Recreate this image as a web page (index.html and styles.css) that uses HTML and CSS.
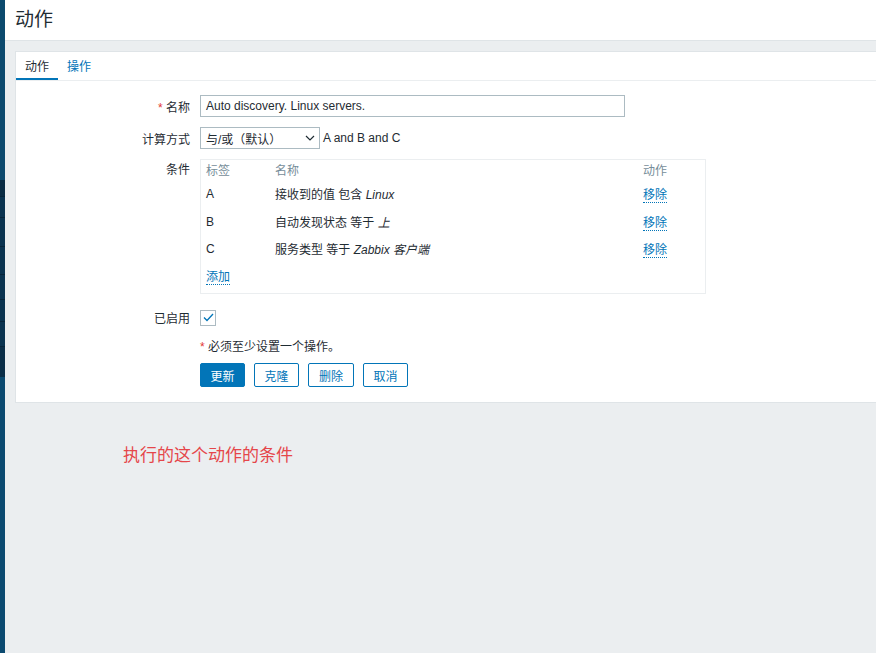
FILE: index.html
```html
<!DOCTYPE html>
<html lang="zh">
<head>
<meta charset="utf-8">
<title>动作</title>
<link rel="stylesheet" href="styles.css">
</head>
<body>
<div class="sidebar">
  <div class="sb-top"></div>
  <div class="sb-dark">
    <div class="sb-seg s1"></div>
    <div class="sb-seg s2"></div>
    <div class="sb-seg s3"></div>
    <div class="sb-seg s4"></div>
    <div class="sb-seg s5"></div>
    <div class="sb-seg s6"></div>
    <div class="sb-seg s7"></div>
    <div class="sb-seg s8"></div>
  </div>
  <div class="sb-bottom"></div>
</div>
<div class="main">
  <header class="page-header"><h1 class="title">动作</h1></header>
  <div class="content">
    <div class="card">
      <ul class="tabs">
        <li class="tab active">动作</li>
        <li class="tab">操作</li>
      </ul>
      <div class="form">
        <div class="row">
          <label class="lbl"><span class="req">*</span> 名称</label>
          <div class="field"><div class="input">Auto discovery. Linux servers.</div></div>
        </div>
        <div class="row">
          <label class="lbl">计算方式</label>
          <div class="field inline">
            <div class="select"><span>与/或（默认）</span>
              <svg class="chev" width="10" height="6" viewBox="0 0 10 6"><path d="M1 1 L5 5 L9 1" fill="none" stroke="#1f2c33" stroke-width="1.2"/></svg>
            </div>
            <span class="formula">A and B and C</span>
          </div>
        </div>
        <div class="row">
          <label class="lbl lbl-top">条件</label>
          <div class="field">
            <div class="cond-box">
              <table class="cond">
                <thead>
                  <tr><th class="c1">标签</th><th class="c2">名称</th><th class="c3">动作</th></tr>
                </thead>
                <tbody>
                  <tr><td>A</td><td>接收到的值 包含 <i>Linux</i></td><td><a class="link">移除</a></td></tr>
                  <tr><td>B</td><td>自动发现状态 等于 <i>上</i></td><td><a class="link">移除</a></td></tr>
                  <tr><td>C</td><td>服务类型 等于 <i>Zabbix 客户端</i></td><td><a class="link">移除</a></td></tr>
                  <tr><td colspan="3"><a class="link">添加</a></td></tr>
                </tbody>
              </table>
            </div>
          </div>
        </div>
        <div class="row row-check">
          <label class="lbl">已启用</label>
          <div class="field">
            <span class="checkbox">
              <svg width="11" height="9" viewBox="0 0 11 9"><path d="M1 4.5 L4 7.5 L10 1" fill="none" stroke="#0275b8" stroke-width="1.3"/></svg>
            </span>
          </div>
        </div>
        <div class="row row-note">
          <div class="lbl"></div>
          <div class="field note"><span class="req">*</span> 必须至少设置一个操作。</div>
        </div>
        <div class="row row-buttons">
          <div class="lbl"></div>
          <div class="field buttons">
            <button class="btn primary">更新</button>
            <button class="btn">克隆</button>
            <button class="btn wide">删除</button>
            <button class="btn">取消</button>
          </div>
        </div>
      </div>
    </div>
    <p class="annotation">执行的这个动作的条件</p>
  </div>
</div>
</body>
</html>
```
FILE: styles.css
```css
* { box-sizing: border-box; }
html, body { margin: 0; padding: 0; }
body {
  display: flex;
  width: 876px;
  height: 653px;
  overflow: hidden;
  background: #ebeef0;
  font-family: "Liberation Sans", Arial, "Noto Sans CJK SC", sans-serif;
  font-size: 12px;
  color: #1f2c33;
}
.sidebar {
  width: 5px;
  flex: none;
  display: flex;
  flex-direction: column;
  background: #0b4a70;
}
.sb-top { height: 180px; background: #0c4a6e; }
.sb-dark { display: flex; flex-direction: column; background: #0a3350; }
.sb-seg { border-bottom: 1px solid #06243a; }
.s1 { height: 17px; background: #0a2c44; }
.s2 { height: 21px; }
.s3 { height: 29px; }
.s4 { height: 28px; }
.s5 { height: 25px; }
.s6 { height: 22px; }
.s7 { height: 25px; }
.s8 { height: 30px; border-bottom: none; background: #0a2e48; }
.sb-bottom { flex: 1; background: #0b4a70; }

.main { flex: 1; display: flex; flex-direction: column; min-width: 0; }
.page-header {
  height: 41px;
  background: #fff;
  border-bottom: 1px solid #dfe4e7;
  padding: 0 10px;
  display: flex;
  align-items: center;
}
.title {
  margin: 0;
  font-size: 19px;
  font-weight: normal;
  color: #1f2c33;
  line-height: 1;
  position: relative;
  top: -1px;
}
.content { padding: 10px 0 0 10px; }
.card {
  background: #fff;
  border: 1px solid #dfe4e7;
  border-right: none;
  height: 352px;
}
.tabs {
  list-style: none;
  margin: 0;
  padding: 0;
  display: flex;
  height: 29px;
  border-bottom: 1px solid #ebeef0;
}
.tab {
  padding: 3px 9px 0 9px;
  line-height: 24px;
  color: #0275b8;
  border-bottom: 2px solid transparent;
  white-space: nowrap;
}
.tab.active { color: #1f2c33; border-bottom-color: #0275b8; }

.form { padding-top: 14px; }
.row { display: flex; align-items: center; margin-bottom: 10px; }
.lbl {
  width: 174px;
  flex: none;
  text-align: right;
  margin-right: 10px;
}
.lbl-top { align-self: flex-start; padding-top: 1px; }
.req { color: #e33734; }
.field { flex: none; }
.inline { display: flex; align-items: center; }
.input {
  width: 425px;
  height: 22px;
  border: 1px solid #acbbc2;
  padding: 0 5px;
  line-height: 20px;
  background: #fff;
}
.select {
  width: 120px;
  height: 22px;
  border: 1px solid #acbbc2;
  padding: 0 4px 0 5px;
  display: flex;
  align-items: center;
  justify-content: space-between;
}
.formula { margin-left: 3px; }

.cond-box {
  width: 506px;
  height: 135px;
  border: 1px solid #ebeef0;
  padding: 0 5px;
}
.cond { border-collapse: collapse; width: 100%; }
.cond th {
  font-weight: normal;
  color: #768d99;
  text-align: left;
  height: 19px;
  padding: 0;
}
.cond td { height: 27px; padding: 0; vertical-align: middle; }
.cond tbody tr:first-child td { height: 29px; }
.c1 { width: 69px; }
.c2 { width: 368px; }
.link {
  color: #0275b8;
  border-bottom: 1px dotted #0275b8;
  text-decoration: none;
}
.row-check { margin-top: 15px; margin-bottom: 11px; }
.checkbox {
  width: 16px;
  height: 16px;
  border: 1px solid #acbbc2;
  display: flex;
  align-items: center;
  justify-content: center;
  background: #fff;
}
.row-note { margin-bottom: 9px; }
.buttons { display: flex; gap: 9px; }
.btn {
  height: 24px;
  width: 45px;
  border: 1px solid #0275b8;
  background: #fff;
  color: #0275b8;
  font-family: inherit;
  font-size: 12px;
  padding: 0;
  border-radius: 2px;
}
.btn.wide { width: 46px; }
.btn.primary { background: #0275b8; color: #fff; }
.annotation {
  margin: 38px 0 0 108px;
  font-size: 17px;
  color: #e5464a;
  font-family: "Noto Sans CJK SC", sans-serif;
}
```
